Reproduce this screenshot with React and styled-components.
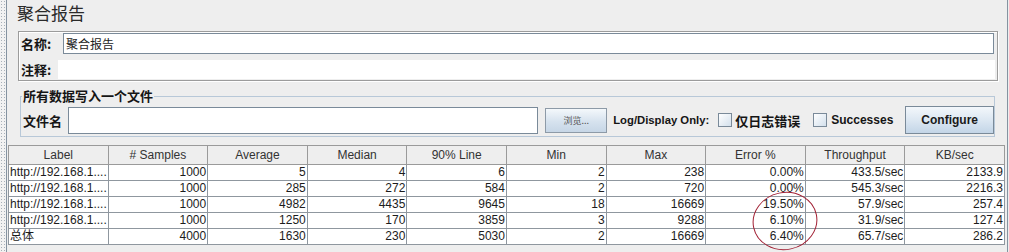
import React from "react";
import styled, { createGlobalStyle } from "styled-components";

const GlobalStyle = createGlobalStyle`
  html, body {
    margin: 0;
    padding: 0;
    background: #eeeeee;
  }
  body {
    font-family: "Liberation Sans", "Noto Sans CJK SC", sans-serif;
    color: #222;
  }
`;

const columns = [
  "Label",
  "# Samples",
  "Average",
  "Median",
  "90% Line",
  "Min",
  "Max",
  "Error %",
  "Throughput",
  "KB/sec",
];

const rows = [
  ["http://192.168.1....", "1000", "5", "4", "6", "2", "238", "0.00%", "433.5/sec", "2133.9"],
  ["http://192.168.1....", "1000", "285", "272", "584", "2", "720", "0.00%", "545.3/sec", "2216.3"],
  ["http://192.168.1....", "1000", "4982", "4435", "9645", "18", "16669", "19.50%", "57.9/sec", "257.4"],
  ["http://192.168.1....", "1000", "1250", "170", "3859", "3", "9288", "6.10%", "31.9/sec", "127.4"],
  ["总体", "4000", "1630", "230", "5030", "2", "16669", "6.40%", "65.7/sec", "286.2"],
];

export default function App() {
  return (
    <>
      <GlobalStyle />
      <Frame>
        <DotStrip />
        <Main>
          <Title>聚合报告</Title>

          <NamePanel>
            <FieldRow>
              <FieldLabel $width={42}>名称:</FieldLabel>
              <NameInput>聚合报告</NameInput>
            </FieldRow>
            <FieldRow $gap={6}>
              <FieldLabel $width={37}>注释:</FieldLabel>
              <CommentArea />
            </FieldRow>
          </NamePanel>

          <FileBox>
            <FileLegend>所有数据写入一个文件</FileLegend>
            <FileRow>
              <BoldLabel $cjk>文件名</BoldLabel>
              <FileInput />
              <BrowseButton>浏览...</BrowseButton>
              <BoldLabel $left={6} $size={11.3}>
                Log/Display Only:
              </BoldLabel>
              <Checkbox $left={9} />
              <BoldLabel $cjk $left={3}>
                仅日志错误
              </BoldLabel>
              <Checkbox $left={13} />
              <BoldLabel $left={4}>Successes</BoldLabel>
              <ConfigureButton>Configure</ConfigureButton>
            </FileRow>
          </FileBox>

          <Table>
            <thead>
              <tr>
                {columns.map((c) => (
                  <HeadCell key={c}>{c}</HeadCell>
                ))}
              </tr>
            </thead>
            <tbody>
              {rows.map((r, i) => (
                <tr key={i}>
                  {r.map((v, j) => (
                    <Cell key={j} $left={j === 0}>
                      {v}
                    </Cell>
                  ))}
                </tr>
              ))}
            </tbody>
          </Table>

          {/* hand-drawn red mark round the error column */}
          <Annotation width="72" height="64" viewBox="0 0 72 64">
            <ellipse
              cx="36"
              cy="32"
              rx="32"
              ry="28.5"
              transform="rotate(-12 36 32)"
              fill="none"
              stroke="#a11f33"
              strokeWidth="1"
            />
          </Annotation>
        </Main>
      </Frame>
    </>
  );
}

const Frame = styled.div`
  display: flex;
  height: 252px;
  width: 1009px;
  overflow: hidden;
`;

const DotStrip = styled.div`
  width: 6px;
  flex-shrink: 0;
  background-color: #f2f2f2;
  background-image: radial-gradient(circle, #a8b0b8 0.7px, transparent 1px);
  background-size: 3px 3px;
`;

const Main = styled.div`
  position: relative;
  flex: 1;
  margin-right: 1px;
  border-left: 1px solid #8593a1;
  border-right: 1px solid #8593a1;
  background: #eeeeee;
`;

const Title = styled.div`
  height: 25px;
  line-height: 25px;
  padding-left: 10px;
  font-family: "Noto Sans CJK SC", sans-serif;
  font-size: 17px;
  color: #2a2a2a;
`;

const NamePanel = styled.div`
  margin: 6px 0 0 11px;
  width: 976px;
  height: 47px;
  border: 1px solid #9c9c9c;
  box-shadow: inset 1px 1px 0 #ffffff, 1px 1px 0 #ffffff;
  padding: 1px 0 0 2px;
  box-sizing: content-box;
  display: flex;
  flex-direction: column;
`;

const FieldRow = styled.div`
  display: flex;
  align-items: center;
  margin-top: ${(p) => p.$gap || 0}px;
`;

const FieldLabel = styled.div`
  width: ${(p) => p.$width}px;
  flex-shrink: 0;
  white-space: nowrap;
  font-family: "Noto Sans CJK SC", sans-serif;
  font-weight: 700;
  font-size: 13px;
  color: #151515;
`;

const NameInput = styled.div`
  width: 927px;
  height: 19px;
  line-height: 19px;
  border: 1px solid #7a8a99;
  background: #ffffff;
  padding-left: 2px;
  box-sizing: content-box;
  font-family: "Noto Sans CJK SC", sans-serif;
  font-size: 12px;
  color: #222;
`;

const CommentArea = styled.div`
  width: 937px;
  height: 19px;
  background: #ffffff;
`;

const FileBox = styled.fieldset`
  margin: 8px 0 0 13px;
  width: 971px;
  padding: 3px 0 2px 2px;
  border: 1px solid #b8c8d8;
  min-width: 0;
`;

const FileLegend = styled.legend`
  margin-left: -1px;
  padding: 0 1px;
  height: 14px;
  line-height: 14px;
  font-family: "Noto Sans CJK SC", sans-serif;
  font-weight: 700;
  font-size: 13px;
  color: #151515;
`;

const FileRow = styled.div`
  display: flex;
  align-items: center;
  height: 28px;
`;

const BoldLabel = styled.span`
  margin-left: ${(p) => p.$left || 0}px;
  font-family: ${(p) =>
    p.$cjk ? '"Noto Sans CJK SC", sans-serif' : '"Liberation Sans", sans-serif'};
  font-weight: 700;
  font-size: ${(p) => (p.$cjk ? 13 : p.$size || 12)}px;
  color: #151515;
  white-space: nowrap;
`;

const FileInput = styled.div`
  margin-left: 6px;
  width: 470px;
  height: 25px;
  border: 1px solid #7a8a99;
  background: #ffffff;
`;

const BrowseButton = styled.button`
  margin-left: 7px;
  width: 62px;
  height: 25px;
  padding: 0;
  border: 1px solid #8d9aa7;
  background: linear-gradient(#f4f8fb, #d6e2ee 55%, #c6d6e6);
  font-family: "Noto Sans CJK SC", sans-serif;
  font-size: 9px;
  color: #555;
`;

const Checkbox = styled.span`
  margin-left: ${(p) => p.$left || 0}px;
  width: 12px;
  height: 12px;
  border: 1px solid #7a8a99;
  background: linear-gradient(135deg, #ffffff, #d3e0ec);
  flex-shrink: 0;
`;

const ConfigureButton = styled.button`
  margin-left: 12px;
  width: 89px;
  height: 28px;
  padding: 0;
  border: 1px solid #7a8a99;
  background: linear-gradient(#f3f7fb, #dce7f2 50%, #c3d5e7);
  font-family: "Liberation Sans", sans-serif;
  font-weight: 700;
  font-size: 12px;
  color: #1a1a1a;
`;

const Table = styled.table`
  margin: 8px 0 0 1px;
  width: 997px;
  table-layout: fixed;
  border-collapse: collapse;
  font-family: "Liberation Sans", "Noto Sans CJK SC", sans-serif;
  font-size: 12px;
`;

const HeadCell = styled.th`
  height: 18px;
  padding: 0;
  font-weight: 400;
  color: #333;
  background: #eeeeee;
  border: 1px solid #9a9a9a;
  white-space: nowrap;
`;

const Cell = styled.td`
  height: 15px;
  padding: 0 1px;
  line-height: 15px;
  background: #ffffff;
  border: 1px solid #8f979f;
  color: #1c1c1c;
  text-align: ${(p) => (p.$left ? "left" : "right")};
  white-space: nowrap;
  overflow: hidden;
`;

const Annotation = styled.svg`
  position: absolute;
  left: 742px;
  top: 189px;
  pointer-events: none;
`;
